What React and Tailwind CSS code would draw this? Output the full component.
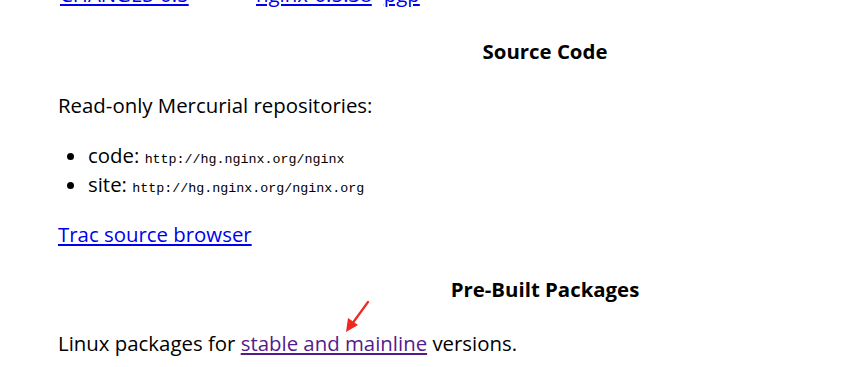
export default function App() {
  const body = "font-['Open_Sans','Noto_Sans',sans-serif]";
  const mono = "font-['Liberation_Mono',monospace] text-[13.33px] leading-none";
  return (
    <div className={`relative w-[856px] h-[367px] overflow-hidden bg-white text-black text-[20.4px] leading-[29px] ${body}`}>
      <div className="-mt-[20px] pl-[58px]">
        {/* downloads table row, cut off by the top edge */}
        <div className="flex h-[29px]">
          <a href="#" className="ml-[2px] w-[196px] text-[#0000ee] underline">CHANGES-0.5</a>
          <a href="#" className="text-[#0000ee] underline">nginx-0.5.38</a>
          <a href="#" className="ml-[12px] text-[#0000ee] underline">pgp</a>
        </div>

        <h4 className="mt-[28px] w-[974px] text-center font-bold">Source Code</h4>

        <p className="mt-[25px]">Read-only Mercurial repositories:</p>

        <ul className="mt-[21px] list-disc pl-[30px]">
          <li>code: <span className={mono}>http://hg.nginx.org/nginx</span></li>
          <li>site: <span className={mono}>http://hg.nginx.org/nginx.org</span></li>
        </ul>

        <p className="mt-[21px]">
          <a href="#" className="text-[#0000ee] underline">Trac source browser</a>
        </p>

        <h4 className="mt-[26px] w-[974px] text-center font-bold">Pre-Built Packages</h4>

        <p className="mt-[25px]">
          Linux packages for{" "}
          <a href="#" className="text-[#551a8b] underline">stable and mainline</a>{" "}
          versions.
        </p>
      </div>

      {/* red annotation arrow */}
      <svg className="absolute left-[340px] top-[298px]" width="34" height="38" viewBox="0 0 34 38">
        <line x1="28" y1="4" x2="12" y2="26" stroke="#f0281e" strokeWidth="2.2" strokeLinecap="round" />
        <polygon points="6,34 8,20 18,27" fill="#f0281e" />
      </svg>
    </div>
  );
}
